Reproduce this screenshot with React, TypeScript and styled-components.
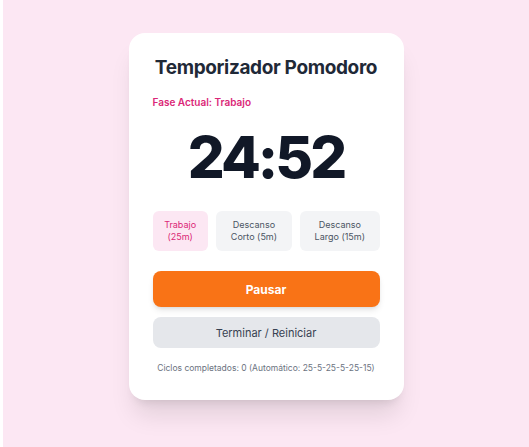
import React from "react";
import styled, { createGlobalStyle } from "styled-components";

const Global = createGlobalStyle`
  html, body { margin: 0; padding: 0; background: #ffffff; }
  body { font-family: Inter, "Noto Sans", sans-serif; }
  * { box-sizing: border-box; }
`;

const Page = styled.div`
  margin-left: 3px;
  min-height: 100vh;
  background: #fce7f3;
  display: flex;
  justify-content: center;
  align-items: flex-start;
  padding-top: 33px;
`;

const Card = styled.div`
  width: 275px;
  background: #ffffff;
  border-radius: 16px;
  padding: 24px 24px 25px;
  box-shadow: 0 20px 25px -5px rgba(0, 0, 0, 0.1), 0 8px 10px -6px rgba(0, 0, 0, 0.1);
  display: flex;
  flex-direction: column;
`;

const Title = styled.h1`
  margin: 0;
  font-size: 19px;
  line-height: 22px;
  font-weight: 700;
  letter-spacing: -0.35px;
  color: #1f2937;
  text-align: center;
  white-space: nowrap;
`;

const Phase = styled.div`
  margin-top: 15px;
  font-size: 10px;
  line-height: 16px;
  font-weight: 600;
  color: #db2777;
`;

const Timer = styled.div`
  margin-top: 18px;
  font-size: 58px;
  line-height: 58px;
  font-weight: 800;
  letter-spacing: -3px;
  color: #111827;
  text-align: center;
`;

const Modes = styled.div`
  margin-top: 25px;
  display: grid;
  grid-template-columns: 55fr 76fr 79fr;
  gap: 8px;
`;

const ModeButton = styled.button<{ $active?: boolean }>`
  border: none;
  border-radius: 6px;
  padding: 8px 4px;
  font-family: inherit;
  font-size: 9px;
  line-height: 12px;
  text-align: center;
  background: ${(p) => (p.$active ? "#fce7f3" : "#f3f4f6")};
  color: ${(p) => (p.$active ? "#db2777" : "#4b5563")};
`;

const PrimaryButton = styled.button`
  margin-top: 20px;
  height: 36px;
  border: none;
  border-radius: 8px;
  background: #f97316;
  color: #ffffff;
  font-family: inherit;
  font-size: 12px;
  font-weight: 700;
  box-shadow: 0 4px 6px -1px rgba(0, 0, 0, 0.1), 0 2px 4px -2px rgba(0, 0, 0, 0.1);
`;

const SecondaryButton = styled.button`
  margin-top: 10px;
  height: 31px;
  border: none;
  border-radius: 8px;
  background: #e5e7eb;
  color: #374151;
  font-family: inherit;
  font-size: 11px;
  font-weight: 400;
`;

const Cycles = styled.div`
  margin-top: 13px;
  font-size: 8.5px;
  line-height: 14px;
  color: #6b7280;
  text-align: center;
  white-space: nowrap;
`;

export default function App() {
  return (
    <>
      <Global />
      <Page>
        <Card>
          <Title>Temporizador Pomodoro</Title>
          <Phase>Fase Actual: Trabajo</Phase>
          <Timer>24:52</Timer>
          <Modes>
            <ModeButton $active>
              Trabajo
              <br />
              (25m)
            </ModeButton>
            <ModeButton>
              Descanso
              <br />
              Corto (5m)
            </ModeButton>
            <ModeButton>
              Descanso
              <br />
              Largo (15m)
            </ModeButton>
          </Modes>
          <PrimaryButton>Pausar</PrimaryButton>
          <SecondaryButton>Terminar / Reiniciar</SecondaryButton>
          <Cycles>Ciclos completados: 0 (Automático: 25-5-25-5-25-15)</Cycles>
        </Card>
      </Page>
    </>
  );
}
